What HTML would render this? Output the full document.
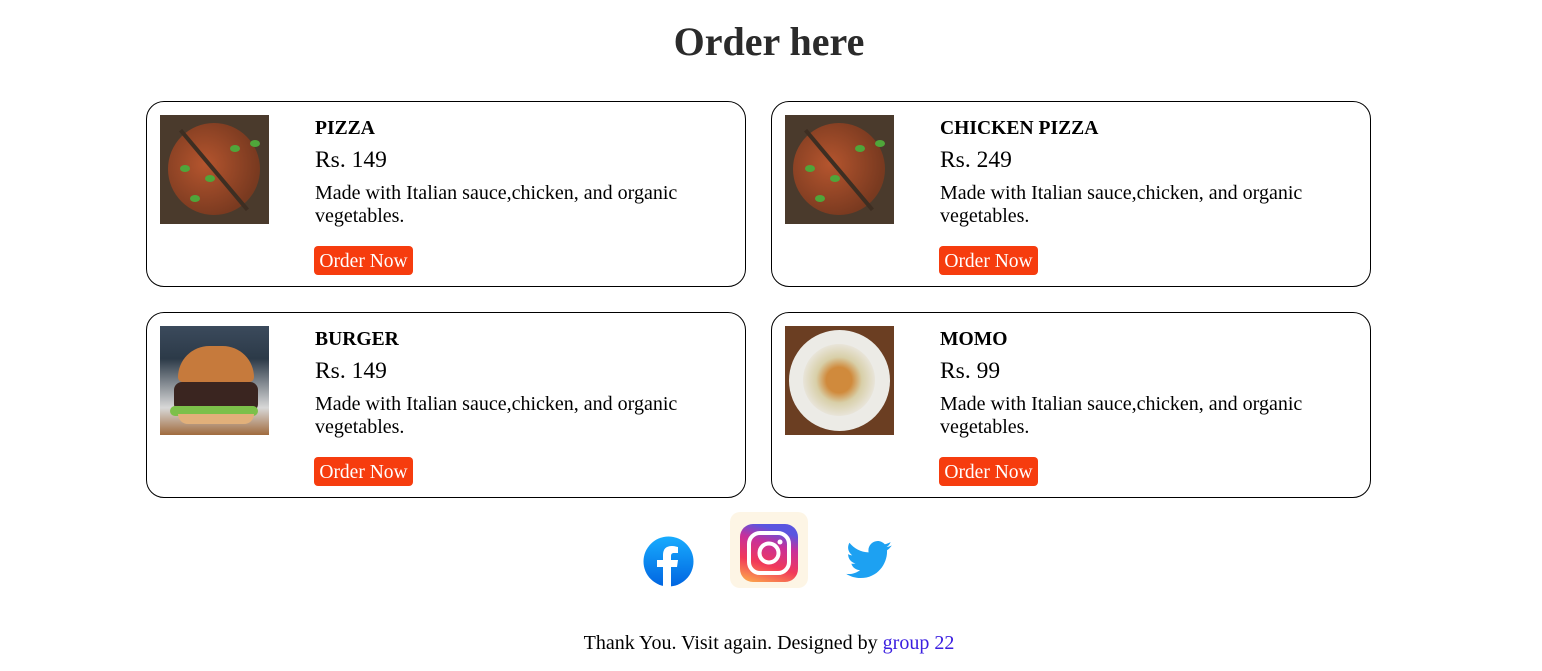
<!DOCTYPE html>
<html><head><meta charset="utf-8"><style>
body{margin:0;background:#fff;font-family:"Liberation Serif",serif;width:1542px;height:671px;position:relative;overflow:hidden}
h1{position:absolute;top:18px;left:0;width:1538px;text-align:center;margin:0;font-size:40px;color:#2b2b2b;font-weight:bold}
.card{position:absolute;width:598px;height:184px;border:1px solid #000;border-radius:18px}
.img{position:absolute;left:13px;top:13px;width:109px;height:109px;overflow:hidden}
.t{position:absolute;left:168px;top:16px;font-weight:bold;font-size:19.6px}
.p{position:absolute;left:168px;top:45px;font-size:23.5px}
.d{position:absolute;left:168px;top:80px;font-size:20px;line-height:23px;width:440px}
.b{position:absolute;left:167px;top:144px;width:99px;height:29px;background:#f63c0e;color:#fff;border-radius:4px;font-size:19.5px;text-align:center;line-height:31px}
.pz{background:#4a3a2c}
.pz .c{position:absolute;left:8px;top:8px;width:92px;height:92px;border-radius:50%;background:radial-gradient(circle at 40% 45%,#b5552e,#7a3a20 70%,#5b3a22);}
.pz .c:after{content:"";position:absolute;left:44px;top:-5px;width:4px;height:104px;background:#3d2e22;transform:rotate(-40deg)}
.g{position:absolute;width:10px;height:7px;border-radius:50%;background:#4fa63a}
.bg{background:linear-gradient(#3b4a5c,#2c3a48 30%,#d8d8d8 75%,#a06b3e)}
.mm{background:#6b3e22}
.ft{position:absolute;top:632px;left:0;width:1538px;text-align:center;font-size:20px}
.ft a{color:#3b1fe0;text-decoration:none}
</style></head><body>
<h1>Order here</h1>

<div class="card" style="left:146px;top:101px">
<div class="img pz"><div class="c"></div><div class="g" style="left:20px;top:50px"></div><div class="g" style="left:70px;top:30px"></div><div class="g" style="left:45px;top:60px"></div><div class="g" style="left:90px;top:25px"></div><div class="g" style="left:30px;top:80px"></div></div>
<div class="t">PIZZA</div><div class="p">Rs. 149</div><div class="d">Made with Italian sauce,chicken, and organic vegetables.</div><div class="b">Order Now</div></div>

<div class="card" style="left:771px;top:101px">
<div class="img pz"><div class="c"></div><div class="g" style="left:20px;top:50px"></div><div class="g" style="left:70px;top:30px"></div><div class="g" style="left:45px;top:60px"></div><div class="g" style="left:90px;top:25px"></div><div class="g" style="left:30px;top:80px"></div></div>
<div class="t">CHICKEN PIZZA</div><div class="p">Rs. 249</div><div class="d">Made with Italian sauce,chicken, and organic vegetables.</div><div class="b">Order Now</div></div>

<div class="card" style="left:146px;top:312px">
<div class="img bg">
<div style="position:absolute;left:18px;top:20px;width:76px;height:36px;border-radius:40px 40px 6px 6px;background:#c67a3c"></div>
<div style="position:absolute;left:14px;top:56px;width:84px;height:30px;border-radius:8px;background:#3a2520"></div>
<div style="position:absolute;left:10px;top:80px;width:88px;height:10px;border-radius:5px;background:#7cc04a"></div>
<div style="position:absolute;left:18px;top:88px;width:76px;height:10px;border-radius:0 0 20px 20px;background:#e2b07a"></div>
</div>
<div class="t">BURGER</div><div class="p">Rs. 149</div><div class="d">Made with Italian sauce,chicken, and organic vegetables.</div><div class="b">Order Now</div></div>

<div class="card" style="left:771px;top:312px">
<div class="img mm"><div style="position:absolute;left:4px;top:4px;width:101px;height:101px;border-radius:50%;background:#ecebe6"></div><div style="position:absolute;left:18px;top:18px;width:72px;height:72px;border-radius:50%;background:radial-gradient(circle,#d08a3c 25%,#d8cfa8 45%,#e8e4d8 70%)"></div></div>
<div class="t">MOMO</div><div class="p">Rs. 99</div><div class="d">Made with Italian sauce,chicken, and organic vegetables.</div><div class="b">Order Now</div></div>

<svg style="position:absolute;left:643px;top:536px" width="51" height="51" viewBox="0 0 51 51"><defs><linearGradient id="f" x1="0" y1="0" x2="0" y2="1"><stop offset="0" stop-color="#18acfe"/><stop offset="1" stop-color="#0165e1"/></linearGradient></defs><circle cx="25.5" cy="25.5" r="25" fill="url(#f)"/><path d="M28 51V31h6l1-7h-7v-4c0-2 1-3 3-3h4v-6c-1 0-3-1-6-1-6 0-9 3-9 9v5h-6v7h6v20z" fill="#fff"/></svg>

<div style="position:absolute;left:730px;top:512px;width:78px;height:76px;background:#fdf3df;border-radius:10px;opacity:.8"></div>
<svg style="position:absolute;left:740px;top:524px" width="58" height="58" viewBox="0 0 58 58"><defs><linearGradient id="i" x1="0" y1="1" x2="0.3" y2="0"><stop offset="0" stop-color="#fdb24b"/><stop offset=".4" stop-color="#f1395a"/><stop offset=".75" stop-color="#c8309a"/><stop offset="1" stop-color="#5a55e0"/></linearGradient></defs><rect width="58" height="58" rx="13" fill="url(#i)"/><rect x="9" y="9" width="40" height="40" rx="11" fill="none" stroke="#fff" stroke-width="4"/><circle cx="29" cy="29" r="9.5" fill="none" stroke="#fff" stroke-width="4"/><circle cx="40" cy="18" r="2.5" fill="#fff"/></svg>

<svg style="position:absolute;left:846px;top:541px" width="46" height="38" viewBox="0 0 24 20"><path d="M24 2.4c-.9.4-1.8.6-2.8.8 1-.6 1.8-1.6 2.2-2.7-1 .6-2 1-3.1 1.2C19.3.7 18 0 16.6 0c-2.7 0-4.9 2.2-4.9 4.9 0 .4 0 .8.1 1.1C7.7 5.8 4.1 3.9 1.7.9c-.4.7-.7 1.6-.7 2.5 0 1.7.9 3.2 2.2 4.1-.8 0-1.600-.2-2.2-.6v.1c0 2.4 1.7 4.4 3.9 4.8-.4.1-.8.2-1.3.2-.3 0-.6 0-.9-.1.6 2 2.4 3.4 4.6 3.4-1.7 1.3-3.8 2.1-6.1 2.1-.4 0-.8 0-1.2-.1 2.2 1.4 4.8 2.2 7.5 2.2 9.1 0 14-7.5 14-14v-.6c1-.7 1.8-1.6 2.5-2.5z" fill="#1da1f2"/></svg>

<div class="ft">Thank You. Visit again. Designed by <a>group 22</a></div>
</body></html>
